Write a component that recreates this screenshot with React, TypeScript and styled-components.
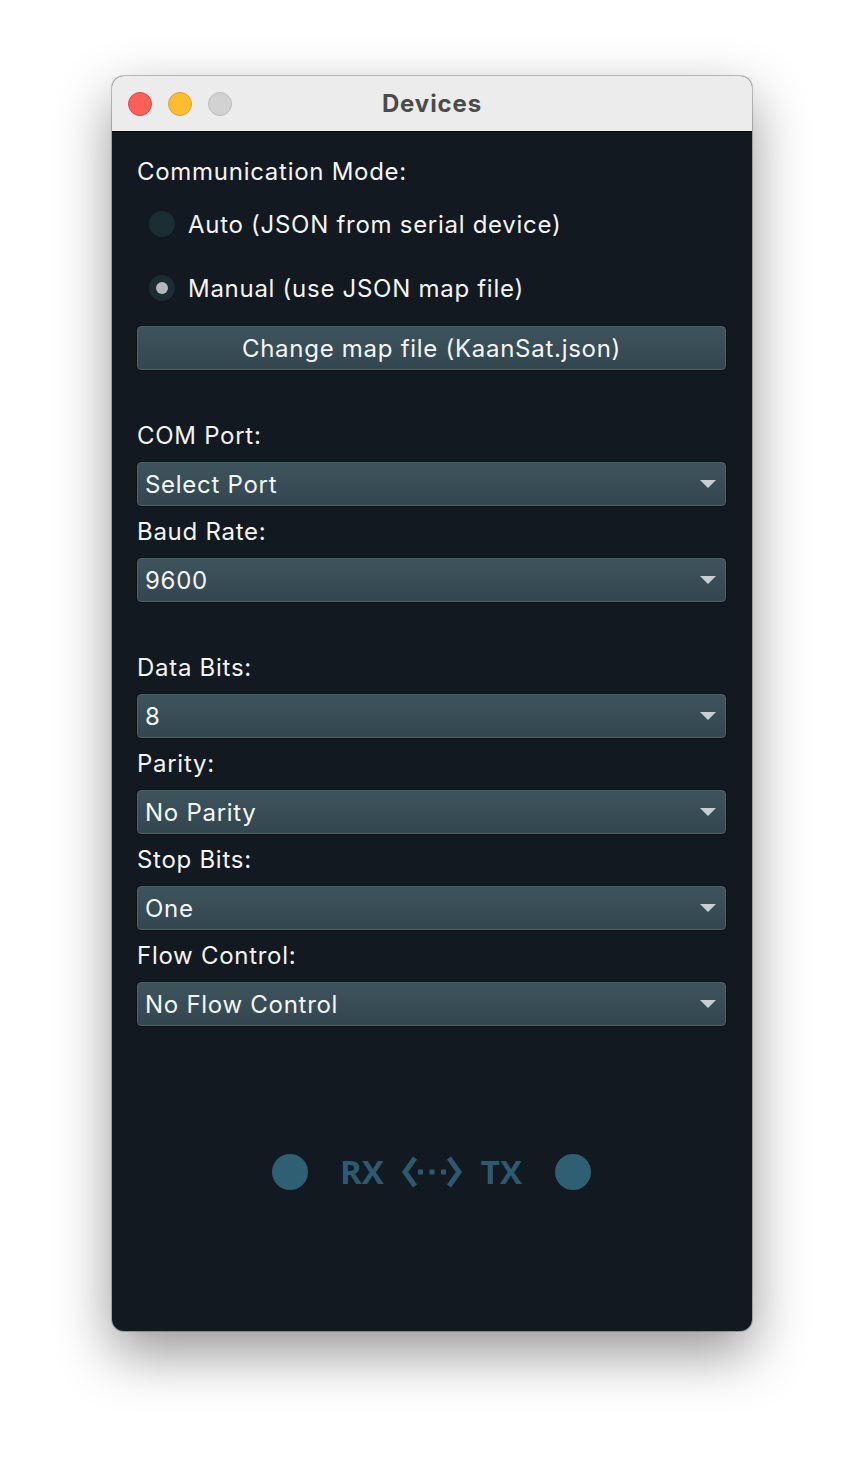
import React from "react";
import styled, { createGlobalStyle } from "styled-components";

const Global = createGlobalStyle`
  html, body { margin: 0; padding: 0; background: #ffffff; }
  body { font-family: Inter, "Noto Sans", sans-serif; }
`;

const Page = styled.div`
  width: 864px;
  height: 1480px;
  box-sizing: border-box;
  padding: 76px 112px 0 112px;
`;

const Window = styled.div`
  width: 640px;
  height: 1255px;
  border-radius: 12px;
  overflow: hidden;
  display: flex;
  flex-direction: column;
  box-shadow: 0 22px 56px rgba(0, 0, 0, 0.42), 0 0 0 1px rgba(0, 0, 0, 0.22);
  background: #131920;
`;

const TitleBar = styled.div`
  height: 55px;
  flex: none;
  background: #ececec;
  border-bottom: 1px solid #0b0f13;
  position: relative;
  display: flex;
  align-items: center;
  justify-content: center;
`;

const Lights = styled.div`
  position: absolute;
  left: 16px;
  top: 16px;
  display: flex;
  gap: 16px;
`;

const Light = styled.span<{ $bg: string; $border: string }>`
  width: 22px;
  height: 22px;
  border-radius: 50%;
  background: ${(p) => p.$bg};
  border: 1px solid ${(p) => p.$border};
`;

const Title = styled.div`
  font-family: Inter, sans-serif;
  font-weight: 700;
  font-size: 24px;
  color: #4b4b4b;
  letter-spacing: 0.9px;
`;

const Body = styled.div`
  flex: 1;
  display: flex;
  flex-direction: column;
  padding: 26px 26px 0 25px;
  color: #f2f4f5;
  font-family: Inter, sans-serif;
  font-size: 24px;
  letter-spacing: 0.72px;
`;

const Label = styled.div<{ $top?: number }>`
  height: 28px;
  line-height: 28px;
  margin-top: ${(p) => p.$top ?? 0}px;
`;

const RadioRow = styled.div<{ $top: number }>`
  display: flex;
  align-items: center;
  height: 28px;
  margin-top: ${(p) => p.$top}px;
  padding-left: 12px;
  gap: 13px;
`;

const RadioDot = styled.span<{ $checked?: boolean }>`
  width: 26px;
  height: 26px;
  border-radius: 50%;
  background: #1c2d34;
  display: flex;
  align-items: center;
  justify-content: center;
  &::after {
    content: "";
    width: 12px;
    height: 12px;
    border-radius: 50%;
    background: ${(p) => (p.$checked ? "#b4b8bb" : "transparent")};
  }
`;

const fieldStyle = `
  height: 44px;
  box-sizing: border-box;
  border-radius: 4px;
  border: 1px solid #4d6369;
  background: linear-gradient(#3e545c, #324650);
  box-shadow: 0 0 0 1px #0c1116;
  color: #f4f6f7;
  font-family: Inter, sans-serif;
  font-size: 24px;
`;

const Button = styled.div<{ $top: number }>`
  ${fieldStyle}
  margin-top: ${(p) => p.$top}px;
  display: flex;
  align-items: center;
  justify-content: center;
`;

const Combo = styled.div`
  ${fieldStyle}
  margin-top: 12px;
  display: flex;
  align-items: center;
  justify-content: space-between;
  padding: 0 8px 0 7px;
`;

const Arrow = styled.span`
  width: 0;
  height: 0;
  border-left: 8px solid transparent;
  border-right: 8px solid transparent;
  border-top: 8px solid #c9ced1;
  margin-right: 1px;
`;

const Group = styled.div<{ $top: number }>`
  display: flex;
  flex-direction: column;
  margin-top: ${(p) => p.$top}px;
`;

const Indicators = styled.div`
  margin-top: 128px;
  display: flex;
  align-items: center;
  justify-content: center;
  letter-spacing: 0;
`;

const Led = styled.span`
  width: 36px;
  height: 36px;
  border-radius: 50%;
  background: #2e5f73;
`;

const Tag = styled.span`
  font-family: "Open Sans", sans-serif;
  font-weight: 700;
  font-size: 33px;
  line-height: 36px;
  color: #2b5a72;
`;

const Spacer = styled.span<{ $w: number }>`
  width: ${(p) => p.$w}px;
`;

function ComboField({ label, value, top = 12 }: { label: string; value: string; top?: number }) {
  return (
    <Group $top={top}>
      <Label>{label}</Label>
      <Combo>
        <span>{value}</span>
        <Arrow />
      </Combo>
    </Group>
  );
}

function LinkIcon() {
  return (
    <svg width="62" height="36" viewBox="0 0 62 36">
      <path d="M14 4 L4 18 L14 32" fill="none" stroke="#2b5a72" strokeWidth="5" strokeLinejoin="miter" />
      <path d="M48 4 L58 18 L48 32" fill="none" stroke="#2b5a72" strokeWidth="5" strokeLinejoin="miter" />
      <rect x="17" y="15.5" width="5" height="5" fill="#2b5a72" />
      <rect x="28.5" y="15.5" width="5" height="5" fill="#2b5a72" />
      <rect x="40" y="15.5" width="5" height="5" fill="#2b5a72" />
    </svg>
  );
}

export default function App() {
  return (
    <>
      <Global />
      <Page>
        <Window>
          <TitleBar>
            <Lights>
              <Light $bg="#ff5f57" $border="#e0443e" />
              <Light $bg="#febc2e" $border="#dea123" />
              <Light $bg="#d2d2d2" $border="#bdbdbd" />
            </Lights>
            <Title>Devices</Title>
          </TitleBar>
          <Body>
            <Label>Communication Mode:</Label>
            <RadioRow $top={24}>
              <RadioDot />
              <span>Auto (JSON from serial device)</span>
            </RadioRow>
            <RadioRow $top={36}>
              <RadioDot $checked />
              <span>Manual (use JSON map file)</span>
            </RadioRow>
            <Button $top={24}>Change map file (KaanSat.json)</Button>
            <ComboField label="COM Port:" value="Select Port" top={52} />
            <ComboField label="Baud Rate:" value="9600" />
            <ComboField label="Data Bits:" value="8" top={52} />
            <ComboField label="Parity:" value="No Parity" />
            <ComboField label="Stop Bits:" value="One" />
            <ComboField label="Flow Control:" value="No Flow Control" />
            <Indicators>
              <Led />
              <Spacer $w={32} />
              <Tag>RX</Tag>
              <Spacer $w={17} />
              <LinkIcon />
              <Spacer $w={18} />
              <Tag>TX</Tag>
              <Spacer $w={33} />
              <Led />
            </Indicators>
          </Body>
        </Window>
      </Page>
    </>
  );
}
